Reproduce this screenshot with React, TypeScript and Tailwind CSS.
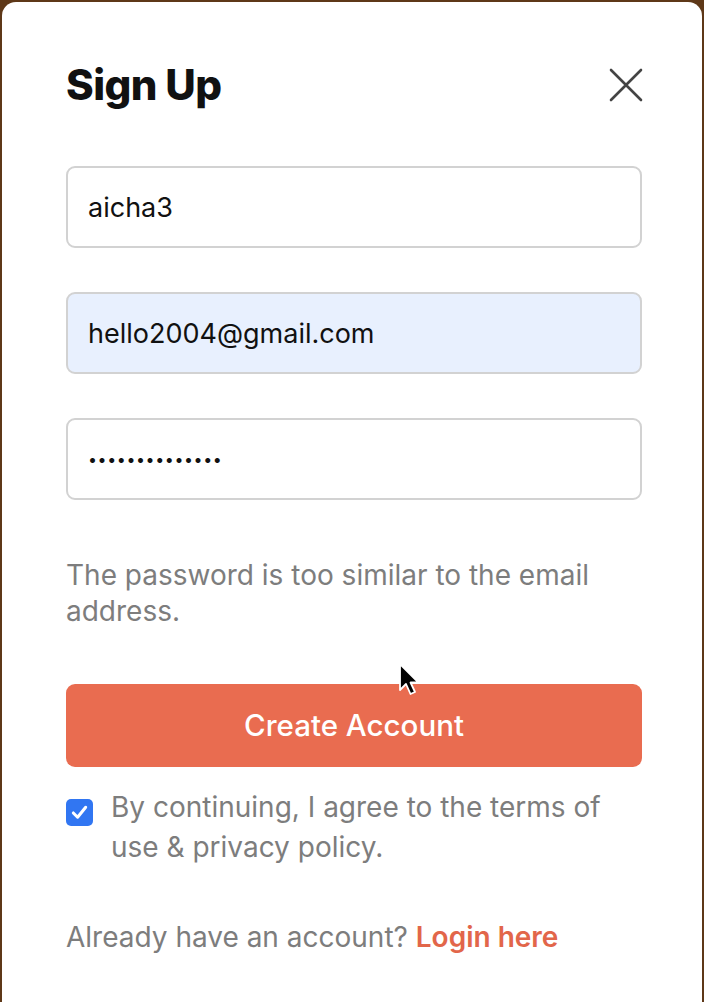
import { useState } from "react";

const SignUpModal = () => {
  const [username, setUsername] = useState("aicha3");
  const [email, setEmail] = useState("hello2004@gmail.com");
  const [password, setPassword] = useState("hello2004pass!");
  const [agreed, setAgreed] = useState(true);

  const inputClass =
    "block h-[82px] w-full rounded-[9px] border-2 border-[#d2d2d2] px-[20px] text-[#111] outline-none";

  return (
    <div className="relative ml-[2px] mt-[2px] min-h-[1000px] w-[700px] rounded-t-[14px] bg-white pl-16 pr-[60px] pt-[59px]">
      <div className="flex h-[48px] items-center justify-between">
        <h2 className="text-[42px] font-extrabold leading-[48px] tracking-[-0.6px] text-[#111]">
          Sign Up
        </h2>
        <button type="button" className="mr-[-1px] text-[#444]">
          <svg width="34" height="34" viewBox="0 0 34 34" fill="none">
            <path
              d="M2 2 L32 32 M32 2 L2 32"
              stroke="currentColor"
              strokeWidth="2.6"
              strokeLinecap="round"
            />
          </svg>
        </button>
      </div>

      <form className="mt-[57px]" onSubmit={(e) => e.preventDefault()}>
        <div className="flex flex-col gap-[44px]">
          <input
            type="text"
            value={username}
            onChange={(e) => setUsername(e.target.value)}
            className={`${inputClass} bg-white text-[27px]`}
          />
          <input
            type="email"
            value={email}
            onChange={(e) => setEmail(e.target.value)}
            className={`${inputClass} bg-[#e8f0fe] text-[27px]`}
          />
          <input
            type="password"
            value={password}
            onChange={(e) => setPassword(e.target.value)}
            className={`${inputClass} bg-white text-[16px] tracking-[0.6px]`}
          />
        </div>

        <p className="mt-[57px] text-[28px] leading-[36px] text-[#7d7d7d]">
          The password is too similar to the email address.
        </p>

        <button
          type="submit"
          className="mt-[55px] h-[83px] w-full rounded-[9px] bg-[#e96c50] text-[29.5px] font-medium text-white"
        >
          Create Account
        </button>

        <label className="mt-[20px] flex items-start gap-[18px]">
          <span
            onClick={() => setAgreed(!agreed)}
            className={`mt-[12px] flex h-[27px] w-[27px] shrink-0 items-center justify-center rounded-[5px] ${
              agreed ? "bg-[#3176f2]" : "border-2 border-[#999] bg-white"
            }`}
          >
            {agreed && (
              <svg width="19" height="19" viewBox="0 0 20 20" fill="none">
                <path
                  d="M3.5 10.5 L8 15 L16.5 4.5"
                  stroke="white"
                  strokeWidth="3.2"
                  strokeLinecap="round"
                  strokeLinejoin="round"
                />
              </svg>
            )}
          </span>
          <span className="max-w-[500px] text-[28px] leading-[40px] text-[#7d7d7d]">
            By continuing, I agree to the terms of use &amp; privacy policy.
          </span>
        </label>

        <p className="mt-[52px] text-[28px] leading-[36px] text-[#7d7d7d]">
          Already have an account?{" "}
          <a href="#" className="font-semibold text-[#e2664a]">
            Login here
          </a>
        </p>
      </form>

      {/* mouse pointer caught in the screenshot */}
      <svg
        className="pointer-events-none absolute left-[396px] top-[660px]"
        width="24"
        height="36"
        viewBox="0 0 24 36"
      >
        <path
          d="M2 2 L2 28 L8 22 L12.5 32 L17 30 L12.5 20.5 L20.5 20.5 Z"
          fill="#000"
          stroke="#fff"
          strokeWidth="1.8"
          strokeLinejoin="round"
        />
      </svg>
    </div>
  );
};

export default function App() {
  return (
    <div
      className="h-[1002px] overflow-hidden bg-[#5e3818]"
      style={{ fontFamily: "Inter, 'Noto Sans', sans-serif" }}
    >
      <SignUpModal />
    </div>
  );
}
